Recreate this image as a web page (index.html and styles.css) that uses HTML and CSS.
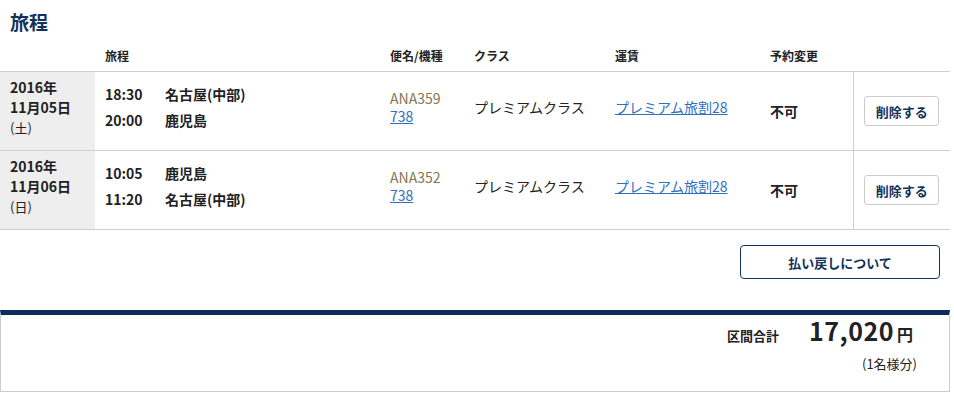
FILE: index.html
```html
<!DOCTYPE html>
<html lang="ja">
<head>
    <meta charset="UTF-8">
    <title>旅程</title>
    <link rel="stylesheet" href="styles.css">
</head>
<body>
    <h2 class="title">旅程</h2>

    <table class="itinerary">
        <thead>
            <tr>
                <th class="col-date"></th>
                <th class="col-route">旅程</th>
                <th class="col-flight">便名/機種</th>
                <th class="col-class">クラス</th>
                <th class="col-fare">運賃</th>
                <th class="col-change">予約変更</th>
                <th class="col-action"></th>
            </tr>
        </thead>
        <tbody>
            <tr>
                <td class="date">
                    <strong>2016年<br>11月05日</strong><br>
                    <span class="weekday">(土)</span>
                </td>
                <td class="route">
                    <div class="leg"><span class="time">18:30</span>名古屋(中部)</div>
                    <div class="leg"><span class="time">20:00</span>鹿児島</div>
                </td>
                <td class="flight">
                    <span class="flight-no">ANA359</span><br>
                    <a href="#">738</a>
                </td>
                <td class="cabin">プレミアムクラス</td>
                <td class="fare"><a href="#">プレミアム旅割28</a></td>
                <td class="change">不可</td>
                <td class="action"><button class="btn-delete">削除する</button></td>
            </tr>
            <tr>
                <td class="date">
                    <strong>2016年<br>11月06日</strong><br>
                    <span class="weekday">(日)</span>
                </td>
                <td class="route">
                    <div class="leg"><span class="time">10:05</span>鹿児島</div>
                    <div class="leg"><span class="time">11:20</span>名古屋(中部)</div>
                </td>
                <td class="flight">
                    <span class="flight-no">ANA352</span><br>
                    <a href="#">738</a>
                </td>
                <td class="cabin">プレミアムクラス</td>
                <td class="fare"><a href="#">プレミアム旅割28</a></td>
                <td class="change">不可</td>
                <td class="action"><button class="btn-delete">削除する</button></td>
            </tr>
        </tbody>
    </table>

    <div class="refund">
        <button class="btn-refund">払い戻しについて</button>
    </div>

    <div class="total">
        <div class="total-line">
            <span class="total-label">区間合計</span>
            <span class="total-amount">17,020</span><span class="total-yen">円</span>
        </div>
        <div class="total-note">(1名様分)</div>
    </div>
</body>
</html>
```

FILE: styles.css
```css
html,
body {
    margin: 0px;
    padding: 0px;
    font-family: "Noto Sans CJK JP", "Noto Sans", sans-serif;
    color: #222;
    background: #fff;
}

.title {
    margin: 0;
    padding: 9px 10px 0;
    height: 32px;
    font-size: 19px;
    font-weight: bold;
    color: #13325b;
    line-height: 26px;
}

.itinerary {
    width: 950px;
    border-collapse: collapse;
    table-layout: fixed;
}

.itinerary th {
    height: 28px;
    padding: 0 0 2px;
    font-size: 12px;
    font-weight: bold;
    text-align: left;
    vertical-align: middle;
    border-bottom: 1px solid #cfcfcf;
}

.col-date { width: 95px; }
.col-route { width: 285px; }
.col-flight { width: 84px; }
.col-class { width: 141px; }
.col-fare { width: 155px; }
.col-change { width: 83px; }
.col-action { width: 97px; }

.itinerary th.col-route { padding-left: 10px; }

.itinerary td {
    height: 67px;
    padding: 0 0 9px;
    font-size: 14px;
    vertical-align: middle;
    border-bottom: 1px solid #cfcfcf;
}

.itinerary td.date {
    background: #eeeeee;
    padding: 5px 0 6px 10px;
    vertical-align: top;
    line-height: 20px;
}

.weekday {
    font-size: 13px;
}

.itinerary td.route {
    padding-left: 10px;
    font-weight: bold;
    line-height: 26px;
}

.time {
    display: inline-block;
    width: 60px;
}

.flight {
    line-height: 18px;
}

.flight-no {
    color: #857650;
}

a {
    color: #2f6fc0;
    text-decoration: underline;
}

.itinerary td.change {
    font-weight: bold;
    padding: 4px 0;
}

.itinerary td.action {
    border-left: 1px solid #cfcfcf;
    text-align: center;
    padding: 4px 0;
}

.btn-delete {
    width: 75px;
    height: 30px;
    padding: 0;
    font-family: inherit;
    font-size: 13px;
    font-weight: bold;
    color: #13325b;
    background: #fff;
    border: 1px solid #cccccc;
    border-radius: 3px;
}

.refund {
    width: 950px;
    display: flex;
    justify-content: flex-end;
    padding: 15px 0 31px;
}

.btn-refund {
    width: 200px;
    height: 34px;
    margin-right: 10px;
    font-family: inherit;
    font-size: 13px;
    font-weight: bold;
    color: #13325b;
    background: #fff;
    border: 1px solid #13325b;
    border-radius: 4px;
}

.total {
    box-sizing: border-box;
    width: 950px;
    height: 82px;
    border: 1px solid #cccccc;
    border-top: 5px solid #0b2d5c;
    display: flex;
    flex-direction: column;
    align-items: flex-end;
}

.total-line {
    display: flex;
    align-items: baseline;
    padding: 2px 36px 0 0;
    line-height: 26px;
}

.total-label {
    font-size: 13px;
    font-weight: bold;
    margin-right: 30px;
}

.total-amount {
    font-size: 25px;
    font-weight: bold;
    letter-spacing: 0.5px;
}

.total-yen {
    font-size: 16px;
    font-weight: bold;
    margin-left: 3px;
}

.total-note {
    font-size: 13px;
    line-height: 19px;
    margin-top: 5px;
    padding-right: 32px;
}
```
